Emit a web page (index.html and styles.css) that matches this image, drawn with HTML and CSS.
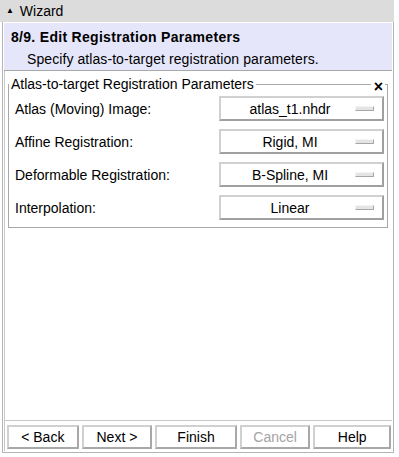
FILE: index.html
```html
<!DOCTYPE html>
<html lang="en">
<head>
  <meta charset="UTF-8">
  <title>Wizard</title>
  <link rel="stylesheet" href="styles.css">
</head>
<body>
  <div class="wizard">
    <div class="titlebar"><span class="arrow">&#9650;</span> Wizard</div>

    <div class="panel">
      <div class="header">
        <div class="step-title">8/9. Edit Registration Parameters</div>
        <div class="step-desc">Specify atlas-to-target registration parameters.</div>
      </div>

      <div class="content">
        <fieldset class="group">
          <legend>Atlas-to-target Registration Parameters</legend>
          <span class="close">&#215;</span>

          <div class="row">
            <span class="label">Atlas (Moving) Image:</span>
            <div class="menubutton"><span class="value">atlas_t1.nhdr</span><span class="indicator"></span></div>
          </div>
          <div class="row">
            <span class="label">Affine Registration:</span>
            <div class="menubutton"><span class="value">Rigid, MI</span><span class="indicator"></span></div>
          </div>
          <div class="row">
            <span class="label">Deformable Registration:</span>
            <div class="menubutton"><span class="value">B-Spline, MI</span><span class="indicator"></span></div>
          </div>
          <div class="row">
            <span class="label">Interpolation:</span>
            <div class="menubutton"><span class="value">Linear</span><span class="indicator"></span></div>
          </div>
        </fieldset>
      </div>

      <div class="buttons">
        <button class="btn btn-back">&lt; Back</button>
        <button class="btn btn-next">Next &gt;</button>
        <button class="btn btn-finish">Finish</button>
        <button class="btn btn-cancel" disabled>Cancel</button>
        <button class="btn btn-help">Help</button>
      </div>
    </div>
  </div>
</body>
</html>
```

FILE: styles.css
```css
body {
  margin: 0;
  background-color: #fff;
  font-family: "Liberation Sans", Arial, sans-serif;
  font-size: 14px;
  color: #000;
}
.wizard {
  width: 394px;
  height: 453px;
  display: flex;
  flex-direction: column;
}
.titlebar {
  height: 22px;
  line-height: 22px;
  background-color: #dcdcdc;
  padding-left: 6px;
  font-size: 14px;
}
.arrow {
  font-size: 8px;
  vertical-align: 3px;
  margin-right: 2px;
}
.panel {
  flex: 1;
  display: flex;
  flex-direction: column;
  margin-left: 2px;
  border-left: 1px solid #b4b4b4;
  border-right: 1px solid #b4b4b4;
  border-bottom: 1px solid #b4b4b4;
  padding: 0 1px 1px 1px;
  background-color: #fff;
}
.header {
  background-color: #e6e6fa;
  border-top: 1px solid #fff;
  border-bottom: 1px solid #a8a8a8;
  padding: 6px 0 4px 7px;
  height: 37px;
}
.step-title {
  font-weight: bold;
  letter-spacing: 0.3px;
  height: 22px;
}
.step-desc {
  padding-left: 16px;
  letter-spacing: 0.08px;
}
.content {
  flex: 1;
  padding: 5px 4px 0 3px;
  border-left: 1px solid #c8c8c8;
}
.group {
  position: relative;
  margin: 0;
  padding: 0 3px 3px 6px;
  border: 1px solid #a8a8a8;
  height: 147px;
}
.group legend {
  padding: 0 2px;
  margin-left: -6px;
}
.close {
  position: absolute;
  top: -14px;
  right: 2px;
  background: #fff;
  padding: 0 2px 0 3px;
  font-size: 16px;
  font-weight: bold;
}
.row {
  display: flex;
  align-items: center;
  justify-content: space-between;
  height: 33px;
}
.menubutton {
  width: 149px;
  height: 21px;
  display: flex;
  align-items: center;
  border: 2px solid #d0d0d0;
  border-right-color: #a0a0a0;
  border-bottom-color: #a0a0a0;
  background-color: #fff;
  padding: 0 8px 0 4px;
}
.value {
  flex: 1;
  text-align: center;
}
.indicator {
  width: 17px;
  height: 3px;
  background-color: #e4e4e4;
  border: 1px solid #a6a6a6;
  border-top-color: #f4f4f4;
  border-left-color: #f4f4f4;
}
.buttons {
  display: flex;
  gap: 3px;
  padding: 4px 1px 2px 2px;
  border-top: 1px solid #c8c8c8;
  border-left: 1px solid #c8c8c8;
}
.btn {
  height: 24px;
  font-family: "Liberation Sans", Arial, sans-serif;
  font-size: 14px;
  background-color: #fff;
  border: 2px solid #d0d0d0;
  border-right-color: #a8a8a8;
  border-bottom-color: #a8a8a8;
  padding: 0;
  color: #000;
}
.btn-back { width: 72px; }
.btn-next { width: 71px; }
.btn-finish { width: 82px; }
.btn-cancel { width: 71px; color: #a3a3a3; }
.btn-help { width: 78px; }
```
